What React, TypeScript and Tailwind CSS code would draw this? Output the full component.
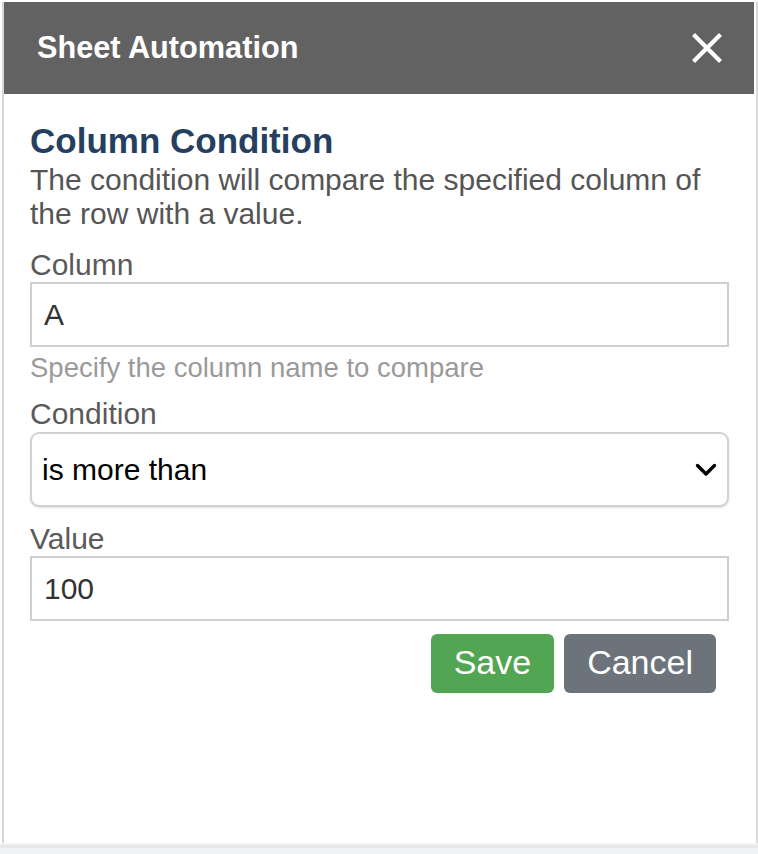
import { useState } from "react";

function CloseIcon() {
  return (
    <svg width="30" height="30" viewBox="0 0 30 30" className="block">
      <path d="M3 3 L27 27 M27 3 L3 27" stroke="#ffffff" strokeWidth="4.2" strokeLinecap="square" />
    </svg>
  );
}

function Chevron() {
  return (
    <svg width="22" height="14" viewBox="0 0 22 14" className="block">
      <path d="M2.5 2.5 L11 11 L19.5 2.5" fill="none" stroke="#000000" strokeWidth="3.4" strokeLinecap="round" strokeLinejoin="round" />
    </svg>
  );
}

export default function App() {
  const [column, setColumn] = useState("A");
  const [value, setValue] = useState("100");

  return (
    <div className="w-[758px] h-[854px] bg-white flex flex-col overflow-hidden font-['Liberation_Sans',Arial,sans-serif]">
      <div className="flex h-[843px] pt-[2px]">
        <div className="w-[2px]" />
        <div className="w-[2px] bg-[#d6d6d6]" />

        <div className="flex-1 flex flex-col">
          {/* header */}
          <div className="h-[92px] bg-[#626262] flex items-center justify-between pl-[33px] pr-[32px]">
            <h1 className="text-white font-bold text-[30.7px] leading-none">Sheet Automation</h1>
            <button className="p-0">
              <CloseIcon />
            </button>
          </div>

          {/* body */}
          <div className="flex-1 flex flex-col pl-[26px] pr-[25px] pt-[27px]">
            <h2 className="text-[#243f60] font-bold text-[35px] leading-[40px]">Column Condition</h2>
            <p className="mt-[2px] text-[#555555] text-[30px] leading-[34px]">
              The condition will compare the specified column of the row with a value.
            </p>

            <label className="mt-[17px] text-[#5a5a5a] text-[30px] leading-[34px]">Column</label>
            <input
              value={column}
              onChange={(e) => setColumn(e.target.value)}
              className="h-[65px] w-full border-2 border-[#cfcfcf] px-[12px] text-[30px] text-[#333333] outline-none bg-white"
            />
            <div className="mt-[6px] text-[#9a9a9a] text-[27.5px] leading-[30px]">Specify the column name to compare</div>

            <label className="mt-[14px] text-[#5a5a5a] text-[30px] leading-[34px]">Condition</label>
            <div className="mt-[1px] h-[75px] w-full border-2 border-[#d2d2d2] rounded-[9px] shadow-[0_1px_2px_rgba(0,0,0,0.12)] flex items-center justify-between pl-[10px] pr-[10px] bg-white">
              <span className="text-[30px] text-black">is more than</span>
              <Chevron />
            </div>

            <label className="mt-[15px] text-[#5a5a5a] text-[30px] leading-[34px]">Value</label>
            <input
              value={value}
              onChange={(e) => setValue(e.target.value)}
              className="h-[65px] w-full border-2 border-[#cfcfcf] px-[12px] text-[30px] text-[#333333] outline-none bg-white"
            />

            <div className="mt-[13px] flex justify-end gap-[10px] pr-[13px]">
              <button className="h-[59px] px-[23px] pb-[3px] rounded-[6px] bg-[#52a552] text-white text-[34px] leading-none">Save</button>
              <button className="h-[59px] px-[23px] pb-[3px] rounded-[6px] bg-[#6c737b] text-white text-[34px] leading-none">Cancel</button>
            </div>
          </div>
        </div>

        <div className="w-[2px]" />
        <div className="w-[2px] bg-[#dadada]" />
      </div>

      <div className="h-[2px] bg-[#f3f4f6]" />
      <div className="h-[3px] bg-[#e6e7e9]" />
      <div className="flex-1 bg-[#f1f2f4]" />
    </div>
  );
}
